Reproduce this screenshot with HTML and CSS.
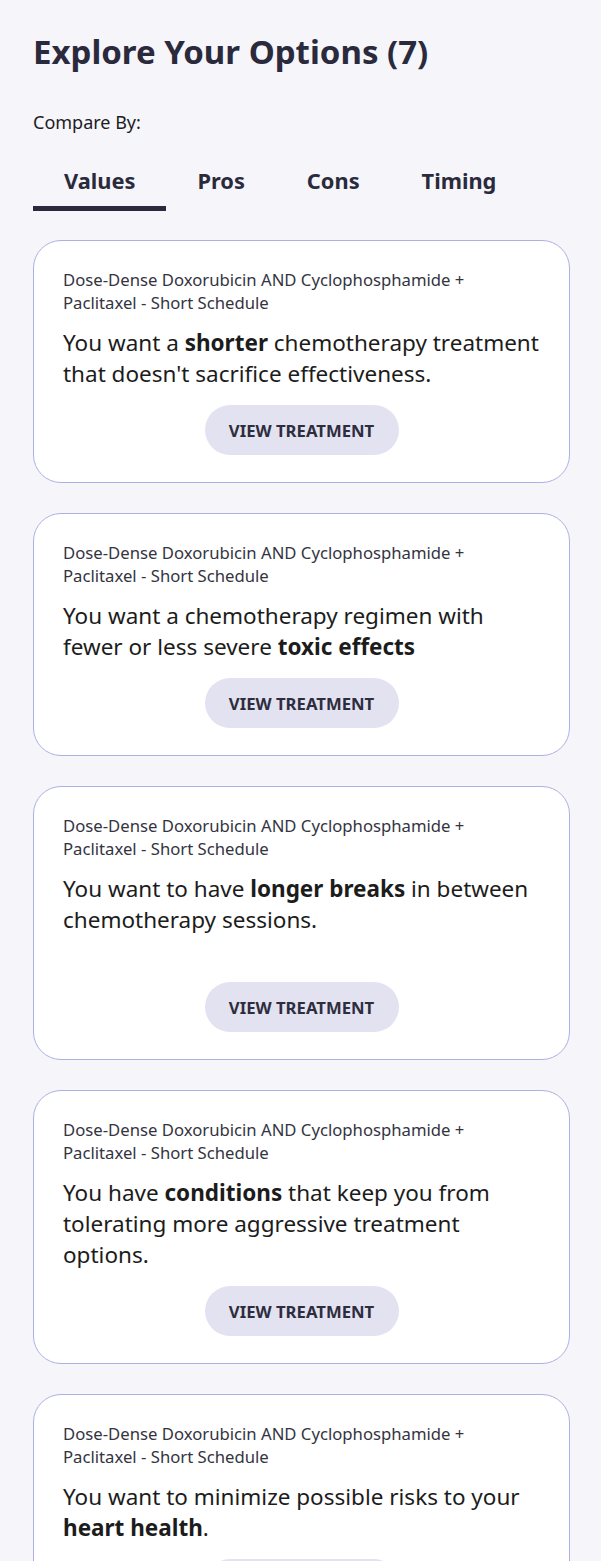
FILE: index.html
```html
<!DOCTYPE html>
<html lang="en">
<head>
<meta charset="utf-8">
<title>Explore Your Options</title>
<link rel="stylesheet" href="styles.css">
</head>
<body>
<main class="page">
  <h1 class="title">Explore Your Options (7)</h1>
  <p class="compare-label">Compare By:</p>
  <nav class="tabs">
    <span class="tab active">Values</span>
    <span class="tab">Pros</span>
    <span class="tab">Cons</span>
    <span class="tab">Timing</span>
  </nav>
  <section class="cards">
    <article class="card">
      <p class="card-name">Dose-Dense Doxorubicin AND Cyclophosphamide + Paclitaxel - Short Schedule</p>
      <p class="card-text">You want a <b>shorter</b> chemotherapy treatment that doesn't sacrifice effectiveness.</p>
      <button class="btn">VIEW TREATMENT</button>
    </article>
    <article class="card">
      <p class="card-name">Dose-Dense Doxorubicin AND Cyclophosphamide + Paclitaxel - Short Schedule</p>
      <p class="card-text">You want a chemotherapy regimen with fewer or less severe <b>toxic effects</b></p>
      <button class="btn">VIEW TREATMENT</button>
    </article>
    <article class="card">
      <p class="card-name">Dose-Dense Doxorubicin AND Cyclophosphamide + Paclitaxel - Short Schedule</p>
      <p class="card-text tall">You want to have <b>longer breaks</b> in between chemotherapy sessions.</p>
      <button class="btn">VIEW TREATMENT</button>
    </article>
    <article class="card">
      <p class="card-name">Dose-Dense Doxorubicin AND Cyclophosphamide + Paclitaxel - Short Schedule</p>
      <p class="card-text">You have <b>conditions</b> that keep you from tolerating more aggressive treatment options.</p>
      <button class="btn">VIEW TREATMENT</button>
    </article>
    <article class="card">
      <p class="card-name">Dose-Dense Doxorubicin AND Cyclophosphamide + Paclitaxel - Short Schedule</p>
      <p class="card-text">You want to minimize possible risks to your <b>heart health</b>.</p>
      <button class="btn">VIEW TREATMENT</button>
    </article>
  </section>
</main>
</body>
</html>
```

FILE: styles.css
```css
html, body {
  margin: 0;
  padding: 0;
  background: #f5f5fa;
}
body {
  font-family: "Noto Sans", "Open Sans", sans-serif;
  color: #1c1c24;
}
.page {
  padding: 34px 31px 40px 33px;
}
.title {
  margin: 0;
  font-size: 33px;
  line-height: 36px;
  font-weight: 700;
  color: #2a2a3c;
}
.compare-label {
  margin: 40px 0 0;
  font-size: 18px;
  line-height: 24px;
  color: #1c1c24;
}
.tabs {
  display: flex;
  margin-top: 25px;
}
.tab {
  padding: 10px 31px 13px;
  font-size: 21.8px;
  line-height: 24px;
  font-weight: 700;
  color: #2a2a3c;
  border-bottom: 5px solid transparent;
}
.tab.active {
  border-bottom-color: #2a2a3c;
}
.cards {
  display: flex;
  flex-direction: column;
  gap: 30px;
  margin-top: 29px;
}
.card {
  background: #fff;
  border: 1px solid #aeb0e4;
  border-radius: 28px;
  padding: 27px 29px 27px;
  display: flex;
  flex-direction: column;
}
.card-name {
  margin: 0;
  font-size: 16.7px;
  line-height: 23px;
  color: #34343f;
}
.card-text {
  margin: 13px 0 0;
  font-size: 22.5px;
  line-height: 31px;
  color: #1c1c1c;
}
.card-text.tall {
  min-height: 93px;
}
.btn {
  align-self: center;
  margin-top: 16px;
  width: 194px;
  height: 50px;
  border: none;
  border-radius: 25px;
  background: #e3e2f0;
  font-family: "Noto Sans", "Open Sans", sans-serif;
  font-size: 16.7px;
  font-weight: 700;
  color: #2d2d3e;
}
```
